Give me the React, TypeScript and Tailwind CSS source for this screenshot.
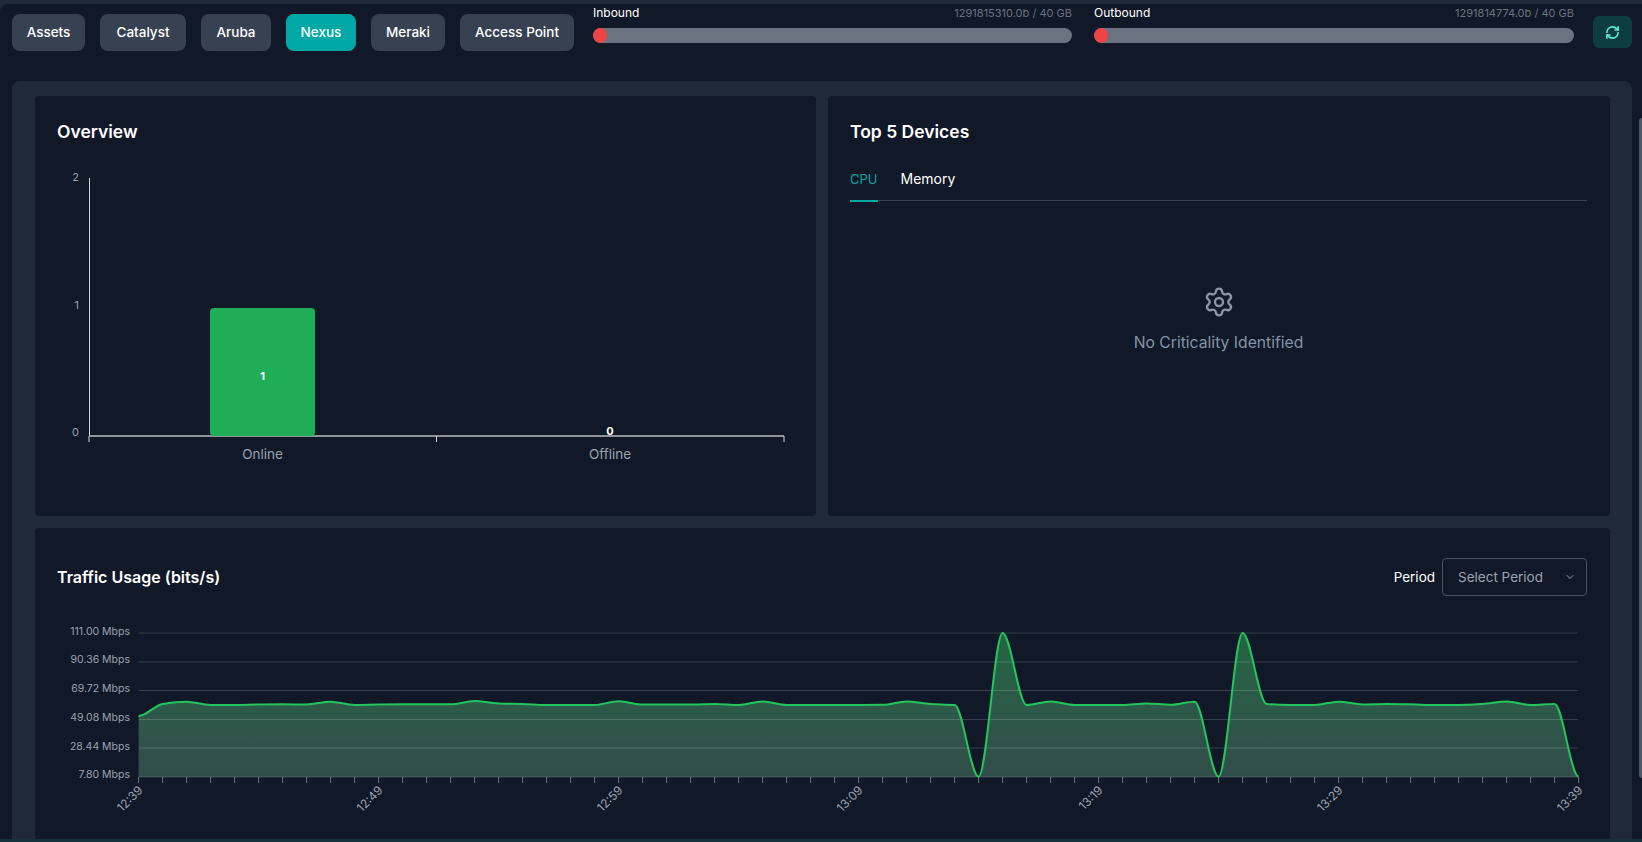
import React from "react";
import { RefreshCw, Settings, ChevronDown } from "lucide-react";

const tabs = ["Assets", "Catalyst", "Aruba", "Nexus", "Meraki", "Access Point"];
const tabWidths: Record<string, string> = {
  Assets: "w-[73px]",
  Catalyst: "w-[86px]",
  Aruba: "w-[70px]",
  Nexus: "w-[70px]",
  Meraki: "w-[74px]",
  "Access Point": "w-[114px]",
};

const yLabels = [
  { text: "111.00 Mbps", y: 635 },
  { text: "90.36 Mbps", y: 663 },
  { text: "69.72 Mbps", y: 692 },
  { text: "49.08 Mbps", y: 721 },
  { text: "28.44 Mbps", y: 750 },
  { text: "7.80 Mbps", y: 778 },
];
const gridLines = [633, 662, 690.5, 719.5, 748, 777];
const timeLabels = ["12:39", "12:49", "12:59", "13:09", "13:19", "13:29", "13:39"];

// traffic samples, one a minute, as y pixels
const samples = [
  716, 704, 701.7, 705, 705, 704.5, 704.3, 704.5, 701.7, 705, 704.5, 704.3, 704.3, 704.3, 701, 703.5,
  704, 705, 705, 705, 701.3, 704.5, 704.6, 704.6, 704, 705, 701.5, 705, 705, 705, 705, 704.8, 701.5,
  704, 705, 776.7, 633, 705, 701.5, 705, 705, 705, 703.5, 704.7, 701.7, 776.7, 633, 704, 705, 705,
  701.7, 704.5, 704, 704.3, 705, 705, 704, 701.5, 705, 704, 776.7,
];

const chartX = (i: number) => 138.6 + i * 24;

// monotone cubic, flat at the peaks and at both ends
function smoothPath(ys: number[]) {
  const tangents = ys.map((y, i) => {
    if (i === 0 || i === ys.length - 1) return 0;
    const a = (y - ys[i - 1]) / 24;
    const b = (ys[i + 1] - y) / 24;
    if (a * b <= 0) return 0;
    return (2 * a * b) / (a + b);
  });
  let d = `M${chartX(0)} ${ys[0]}`;
  for (let i = 0; i < ys.length - 1; i++) {
    const x0 = chartX(i);
    const x1 = chartX(i + 1);
    d += ` C${x0 + 8} ${ys[i] + tangents[i] * 8} ${x1 - 8} ${ys[i + 1] - tangents[i + 1] * 8} ${x1} ${ys[i + 1]}`;
  }
  return d;
}

const linePath = smoothPath(samples);
const areaPath = `${linePath} L${chartX(60)} 777 L${chartX(0)} 777 Z`;

const UsageBar = ({ label, usage, width }: { label: string; usage: string; width: string }) => {
  return (
    <div className={width}>
      <div className="flex justify-between items-center h-[18px] text-[12px] leading-[18px]">
        <span className="text-white">{label}</span>
        <span className="text-[11px] text-[#6b7280]">{usage}</span>
      </div>
      <div className="mt-[6px] h-[15px] rounded-full bg-[#6b7280] overflow-hidden">
        <div className="h-full w-[14px] rounded-full bg-[#ef4444]" />
      </div>
    </div>
  );
};

const OverviewChart = () => {
  return (
    <svg width="781" height="340" viewBox="35 150 781 340" className="block font-['Inter',sans-serif]">
      <line x1="89.5" y1="178" x2="89.5" y2="436" stroke="#d1d5db" strokeWidth="1" />
      <line x1="89" y1="436" x2="784" y2="436" stroke="#b8bcc2" strokeWidth="1.5" />
      <line x1="89" y1="436" x2="89" y2="442" stroke="#d1d5db" />
      <line x1="436.5" y1="436" x2="436.5" y2="442" stroke="#d1d5db" />
      <line x1="784" y1="436" x2="784" y2="442" stroke="#d1d5db" />
      <text x="79" y="181" textAnchor="end" fontSize="11" fill="#9ca3af">2</text>
      <text x="79" y="309" textAnchor="end" fontSize="11" fill="#9ca3af">1</text>
      <text x="79" y="436" textAnchor="end" fontSize="11" fill="#9ca3af">0</text>
      <rect x="210" y="308" width="105" height="128" rx="4" fill="#20ad58" />
      <text x="262.5" y="380" textAnchor="middle" fontSize="11" fontWeight="700" fill="#ffffff">1</text>
      <text x="610" y="435" textAnchor="middle" fontSize="11" fontWeight="700" fill="#ffffff">0</text>
      <text x="262.5" y="459" textAnchor="middle" fontSize="13.5" fill="#9ca3af">Online</text>
      <text x="610" y="459" textAnchor="middle" fontSize="13.5" fill="#9ca3af">Offline</text>
    </svg>
  );
};

const TrafficChart = () => {
  return (
    <svg width="1575" height="215" viewBox="35 610 1575 215" className="block font-['Inter',sans-serif]">
      <defs>
        <linearGradient id="trafficFill" x1="0" y1="633" x2="0" y2="777" gradientUnits="userSpaceOnUse">
          <stop offset="0" stopColor="#22663f" />
          <stop offset="0.5" stopColor="#2d5a49" />
          <stop offset="1" stopColor="#324d49" />
        </linearGradient>
      </defs>
      <path d={areaPath} fill="url(#trafficFill)" />
      {gridLines.map((y) => (
        <line key={y} x1="138.6" y1={y} x2="1578" y2={y} stroke="#ffffff" strokeOpacity="0.17" strokeWidth="1" />
      ))}
      {samples.map((_, i) => (
        <line key={i} x1={chartX(i)} y1="777" x2={chartX(i)} y2="783" stroke="#6b7280" strokeWidth="1" />
      ))}
      <path d={linePath} fill="none" stroke="#22c55e" strokeWidth="2" />
      {yLabels.map((l) => (
        <text key={l.text} x="130" y={l.y} textAnchor="end" fontSize="10.5" fill="#9ca3af">
          {l.text}
        </text>
      ))}
      {timeLabels.map((t, i) => (
        <text
          key={t}
          x={chartX(i * 10) + 5}
          y="791"
          textAnchor="end"
          fontSize="12"
          fill="#9ca3af"
          transform={`rotate(-45 ${chartX(i * 10) + 5} 791)`}>
          {t}
        </text>
      ))}
    </svg>
  );
};

const App: React.FC = () => {
  return (
    <div className="relative h-[842px] w-[1642px] overflow-hidden bg-[#1f2937] pt-[4px] font-['Inter',sans-serif]">
      <div className="h-[835px] rounded-tl-lg bg-[#111827] px-[12px]">
        {/* Header */}
        <div className="flex h-[77px] items-start">
          <div className="flex shrink-0 gap-[15px] pt-[10px]">
            {tabs.map((tab) => (
              <button
                key={tab}
                className={`h-[37px] rounded-lg text-[13.5px] font-medium ${tabWidths[tab]} ${
                  tab === "Nexus" ? "bg-[#00a9a5] text-white" : "bg-[#374151] text-white"
                }`}>
                {tab}
              </button>
            ))}
          </div>
          <div className="ml-[19px] flex shrink-0 gap-[22px]">
            <UsageBar label="Inbound" usage="1291815310.0b / 40 GB" width="w-[479px]" />
            <UsageBar label="Outbound" usage="1291814774.0b / 40 GB" width="w-[480px]" />
          </div>
          <button className="ml-[19px] mt-[12px] flex h-[32px] w-[39px] shrink-0 items-center justify-center rounded-md bg-[#0d3d40] text-[#5eead4]">
            <RefreshCw className="h-[15px] w-[15px]" strokeWidth={2.5} />
          </button>
        </div>

        {/* Panel */}
        <div className="h-[800px] w-[1620px] rounded-lg bg-[#1f2937] pl-[23px] pr-[22px] pt-[15px]">
          <div className="flex gap-[12px]">
            <div className="h-[420px] w-[781px] rounded bg-[#111827]">
              <h3 className="h-[54px] pl-[22px] pt-[24px] text-[17.5px] leading-[24px] font-semibold text-white">Overview</h3>
              <OverviewChart />
            </div>
            <div className="h-[420px] w-[782px] rounded bg-[#111827] pl-[22px] pr-[23px]">
              <h3 className="h-[54px] pt-[24px] text-[17.5px] leading-[24px] font-semibold text-white">Top 5 Devices</h3>
              <div className="flex h-[51px] items-end gap-[23px] border-b border-[#374151] pb-[11px] text-[14px] leading-[20px]">
                <span className="relative text-[13px] text-[#00a9a5]">
                  CPU
                  <span className="absolute -bottom-[13px] left-0 h-[2px] w-[28px] bg-[#00a9a5]" />
                </span>
                <span className="text-white">Memory</span>
              </div>
              <div className="flex flex-col items-center pt-[85px]">
                <Settings className="h-[32px] w-[32px] text-[#8b95a3]" strokeWidth={1.75} />
                <p className="mt-[13px] text-[15.7px] leading-[24px] text-[#8494a8]">No Criticality Identified</p>
              </div>
            </div>
          </div>

          <div className="mt-[12px] h-[340px] w-[1575px] rounded bg-[#111827]">
            <div className="flex h-[82px] items-center justify-between pl-[22px] pr-[23px] pt-[16px]">
              <h3 className="text-[16px] font-semibold text-white">Traffic Usage (bits/s)</h3>
              <div className="flex items-center gap-[7px]">
                <span className="text-[13.5px] text-white">Period</span>
                <div className="flex h-[38px] w-[145px] items-center justify-between rounded border border-[#4b5563] pl-[15px] pr-[10px] text-[13.5px] text-[#9ca3af]">
                  Select Period
                  <ChevronDown className="h-[12px] w-[12px]" />
                </div>
              </div>
            </div>
            <TrafficChart />
          </div>
        </div>
      </div>

      {/* Scrollbar and bottom edge */}
      <div className="absolute right-0 top-[118px] h-[660px] w-[3px] rounded-l bg-[#4b5563]" />
      <div className="absolute bottom-0 left-0 right-0 h-[3px] bg-[#16323a]" />
    </div>
  );
};

export default App;
